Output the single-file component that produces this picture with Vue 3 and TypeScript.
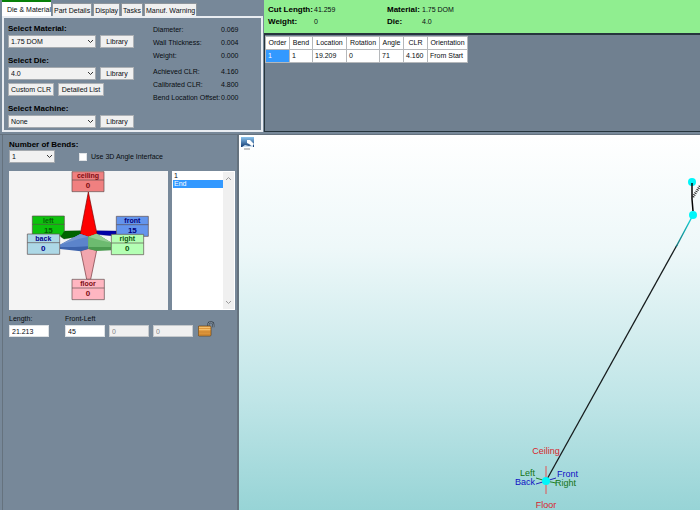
<script setup lang="ts">
import { ref } from 'vue'

interface Field { label: string; value: string }
interface Picker { id: string; label: string; options: string[]; value: string; extra: string[] }
interface Face { name: string; value: number; x: number; y: number; fill: string; ink: string }

const tabs = ['Die & Material', 'Part Details', 'Display', 'Tasks', 'Manuf. Warning']
const activeTab = ref(0)

const pickers = ref<Picker[]>([
  { id: 'material', label: 'Select Material:', options: ['1.75 DOM'], value: '1.75 DOM', extra: [] },
  { id: 'die', label: 'Select Die:', options: ['4.0'], value: '4.0', extra: ['Custom CLR', 'Detailed List'] },
  { id: 'machine', label: 'Select Machine:', options: ['None'], value: 'None', extra: [] },
])

const factGroups: Field[][] = [
  [
    { label: 'Diameter:', value: '0.069' },
    { label: 'Wall Thickness:', value: '0.004' },
    { label: 'Weight:', value: '0.000' },
  ],
  [
    { label: 'Achieved CLR:', value: '4.160' },
    { label: 'Calibrated CLR:', value: '4.800' },
    { label: 'Bend Location Offset:', value: '0.000' },
  ],
]

const summary: Field[] = [
  { label: 'Cut Length:', value: '41.259' },
  { label: 'Material:', value: '1.75 DOM' },
  { label: 'Weight:', value: '0' },
  { label: 'Die:', value: '4.0' },
]

const columns = ['Order', 'Bend', 'Location', 'Rotation', 'Angle', 'CLR', 'Orientation']
const rows = [['1', '1', '19.209', '0', '71', '4.160', 'From Start']]

const bendCount = ref('1')
const use3d = ref(false)
const segment = ref('End')
const length = ref('21.213')
const frontLeft = ref('45')
const angleB = ref('0')
const angleC = ref('0')

const backFaces: Face[] = [
  { name: 'ceiling', value: 0, x: 216, y: 20, fill: '#f08080', ink: '#7d0c12' },
  { name: 'left', value: 15, x: 97, y: 153, fill: '#0cc20c', ink: '#066006' },
  { name: 'front', value: 15, x: 349, y: 154, fill: '#6495ed', ink: '#00007c' },
]
const frontFaces: Face[] = [
  { name: 'back', value: 0, x: 82, y: 207, fill: '#add8e6', ink: '#00008b' },
  { name: 'right', value: 0, x: 334, y: 208, fill: '#b4ffb4', ink: '#0b550b' },
  { name: 'floor', value: 0, x: 216, y: 343, fill: '#ffb6c1', ink: '#7d0c12' },
]
</script>

<template>
  <main class="app">
    <div class="top">
      <section class="setup">
        <div class="tabs" role="tablist">
          <button v-for="(t, i) in tabs" :key="t" type="button" role="tab" class="tab"
            :class="{ active: i === activeTab }" :aria-selected="i === activeTab" @click="activeTab = i">{{ t }}</button>
        </div>
        <div class="sheet">
          <div class="pickers">
            <div v-for="p in pickers" :key="p.id" class="picker">
              <label class="strong" :for="p.id">{{ p.label }}</label>
              <div class="line">
                <span class="combo">
                  <select :id="p.id" v-model="p.value"><option v-for="o in p.options" :key="o">{{ o }}</option></select>
                  <svg viewBox="0 0 7 5" aria-hidden="true"><path d="M1 1l2.5 2.5L6 1" /></svg>
                </span>
                <button type="button" class="btn library">Library</button>
              </div>
              <div v-if="p.extra.length" class="extras">
                <button v-for="e in p.extra" :key="e" type="button" class="btn">{{ e }}</button>
              </div>
            </div>
          </div>
          <div class="facts">
            <dl v-for="(g, i) in factGroups" :key="i">
              <template v-for="f in g" :key="f.label"><dt>{{ f.label }}</dt><dd>{{ f.value }}</dd></template>
            </dl>
          </div>
        </div>
      </section>

      <section class="results">
        <dl class="summary">
          <template v-for="s in summary" :key="s.label"><dt>{{ s.label }}</dt><dd>{{ s.value }}</dd></template>
        </dl>
        <div class="grid">
          <table>
            <colgroup><col class="w24"><col class="w23"><col class="w34"><col class="w33"><col class="w24"><col class="w24"><col class="w40"></colgroup>
            <thead><tr><th v-for="c in columns" :key="c" scope="col">{{ c }}</th></tr></thead>
            <tbody>
              <tr v-for="r in rows" :key="r[0]"><td v-for="(c, i) in r" :key="i" :class="{ picked: i === 0 }">{{ c }}</td></tr>
            </tbody>
          </table>
        </div>
      </section>
    </div>

    <div class="bottom">
      <section class="bends">
        <label class="strong" for="bend-count">Number of Bends:</label>
        <div class="count">
          <span class="combo small">
            <select id="bend-count" v-model="bendCount"><option>1</option><option>2</option></select>
            <svg viewBox="0 0 7 5" aria-hidden="true"><path d="M1 1l2.5 2.5L6 1" /></svg>
          </span>
          <label class="check"><input v-model="use3d" type="checkbox">Use 3D Angle Interface</label>
        </div>

        <div class="orient">
          <svg class="compass" viewBox="27 18 477 417" role="img" aria-label="Direction angles">
            <g stroke-linejoin="round">
              <g v-for="f in backFaces" :key="f.name">
                <rect :x="f.x" :y="f.y" width="96" height="60" :fill="f.fill" stroke="#5c4b4b" stroke-width="2" />
                <path :d="`M${f.x} ${f.y + 25}h96`" stroke="#5c4b4b" stroke-width="2" />
                <text class="face" :x="f.x + 48" :y="f.y + 20" :fill="f.ink">{{ f.name }}</text>
                <text class="num" :x="f.x + 48" :y="f.y + 50" :fill="f.ink">{{ f.value }}</text>
              </g>
              <path d="M194 198L241 197L250 212L192 222L182 215Z" fill="#006400" stroke="#033c03" />
              <path d="M290 197L348 198V208L334 212L285 208Z" fill="#0000a8" stroke="#000060" />
              <path d="M265 81L291 207L265 216L241 207Z" fill="#fe0000" stroke="#780000" stroke-width="2" />
              <path d="M242 256L265 250L290 256L272 343H260Z" fill="#f2a6ae" stroke="#6f3038" stroke-width="2" />
              <path d="M180 239L241 207L265 215V252L242 259L180 252Z" fill="#3d63ac" />
              <path d="M180 239L241 207L265 215V244L225 246L180 246Z" fill="#5c84cb" />
              <path d="M180 239L241 207L265 215L235 222Z" fill="#7697cf" />
              <path d="M265 215L290 206L334 233V256L290 258L265 252Z" fill="#4b9b50" />
              <path d="M265 215L290 206L334 233V246L265 246Z" fill="#6dbb70" />
              <path d="M265 215L290 206L334 233L298 225Z" fill="#93ce93" />
              <g v-for="f in frontFaces" :key="f.name">
                <rect :x="f.x" :y="f.y" width="97" height="61" :fill="f.fill" stroke="#5c4b4b" stroke-width="2" />
                <path :d="`M${f.x} ${f.y + 26}h97`" stroke="#5c4b4b" stroke-width="2" />
                <text class="face" :x="f.x + 48" :y="f.y + 20" :fill="f.ink">{{ f.name }}</text>
                <text class="num" :x="f.x + 48" :y="f.y + 50" :fill="f.ink">{{ f.value }}</text>
              </g>
            </g>
          </svg>
          <div class="segments">
            <ul role="listbox" aria-label="Segments">
              <li v-for="s in ['1', 'End']" :key="s" role="option" tabindex="0" :aria-selected="s === segment"
                :class="{ chosen: s === segment }" @click="segment = s" @keydown.enter="segment = s">{{ s }}</li>
            </ul>
            <span class="rail" aria-hidden="true">
              <svg viewBox="0 0 7 5"><path d="M1 4l2.5-2.5L6 4" /></svg>
              <svg viewBox="0 0 7 5"><path d="M1 1l2.5 2.5L6 1" /></svg>
            </span>
          </div>
        </div>

        <div class="measures">
          <div class="measure first">
            <label for="length">Length:</label>
            <input id="length" v-model="length" type="text">
          </div>
          <div class="measure">
            <label for="front-left">Front-Left</label>
            <input id="front-left" v-model="frontLeft" type="text">
          </div>
          <input v-model="angleB" type="text" aria-label="Second angle" disabled>
          <input v-model="angleC" type="text" aria-label="Third angle" disabled>
          <button type="button" class="lock" aria-label="Unlock">
            <svg viewBox="0 0 51 48">
              <path d="M31 16V9Q32 4 38 4Q46 4 46 11V19" fill="none" stroke="#303b45" stroke-width="6" />
              <path d="M31 16V9Q32 4 38 4Q46 4 46 11V19" fill="none" stroke="#a8b4bf" stroke-width="2" />
              <rect x="1" y="15" width="38" height="30" rx="3" fill="#e0983c" stroke="#5f3c14" stroke-width="2" />
              <path d="M3 19H37M3 26H37" stroke="#f7c777" stroke-width="3" />
              <path d="M3 33H37M3 40H37" stroke="#c27c2b" stroke-width="2" />
            </svg>
          </button>
        </div>
      </section>

      <section class="view">
        <svg class="scene" viewBox="0 0 461 375" preserveAspectRatio="xMinYMin slice" role="img" aria-label="Bent tube preview">
          <defs>
            <linearGradient id="pic" x2="0" y2="1"><stop stop-color="#8bc4ee" /><stop offset="1" stop-color="#153d73" /></linearGradient>
            <linearGradient id="bend" gradientUnits="userSpaceOnUse" x1="454" y1="80" x2="437" y2="112"><stop stop-color="#16dfe3" /><stop offset="1" stop-color="#126f75" /></linearGradient>
          </defs>
          <rect x="2" y="2" width="13" height="10" fill="url(#pic)" />
          <path d="M3 12L6 10L10 11L14 10V12Z" fill="#cfe2f1" />
          <path d="M8 5L11 5L15 9L13 11L10 9L8 8Z" fill="#fff" />
          <path d="M5 14H11" stroke="#8f8f8f" />

          <path d="M307 346L438 110" stroke="#161c1d" stroke-width="1.3" />
          <path d="M437 112L454 80" stroke="url(#bend)" stroke-width="1.4" />
          <circle cx="453" cy="47" r="4" fill="#00f6fa" />
          <circle cx="454" cy="80" r="4" fill="#00f6fa" />
          <path d="M453 48V64L454 76" stroke="#050505" stroke-width="1.5" fill="none" />
          <path d="M454 62L461 51" stroke="#252525" stroke-width="2.5" stroke-dasharray="1 1" />

          <path d="M307 331V359" stroke="#e25353" />
          <path d="M297 343L307 346L317 348" stroke="#258225" fill="none" />
          <path d="M297 349L307 346L317 343" stroke="#2525b8" fill="none" />
          <circle cx="307" cy="346" r="4" fill="#00f6fa" />
          <g class="axis">
            <text x="307" y="319" text-anchor="middle" fill="#d8262c">Ceiling</text>
            <text x="307" y="373" text-anchor="middle" fill="#d8262c">Floor</text>
            <text x="296" y="341" text-anchor="end" fill="#137413">Left</text>
            <text x="296" y="350" text-anchor="end" fill="#1010c4">Back</text>
            <text x="318" y="342" fill="#1010c4">Front</text>
            <text x="316" y="351" fill="#137413">Right</text>
          </g>
        </svg>
      </section>
    </div>
  </main>
</template>

<style>
body { margin: 0; background: #778899; }
</style>

<style scoped>
* { box-sizing: border-box; }
.app {
  min-height: 100vh;
  display: flex;
  flex-direction: column;
  background: #778899;
  color: #080c10;
  font: 7px/10px "Liberation Sans", Arial, sans-serif;
  white-space: nowrap;
}
button, input, select { font: inherit; color: inherit; margin: 0; }
dl, dd, ul { margin: 0; padding: 0; }
.strong { font-size: 8px; font-weight: bold; line-height: 10px; color: #000; }

.top { display: flex; }
.setup { width: 264px; flex: none; padding: 0 1px 2px 2px; display: flex; flex-direction: column; }
.tabs { display: flex; align-items: flex-end; gap: 1px; height: 16px; }
.tab {
  height: 13px; padding: 0 1px; border: 1px solid #8e959c; border-bottom: 0;
  background: #f0f0f0; line-height: 11px;
}
.tab.active { height: 16px; padding: 0 0 0 5px; border: 0; border-top: 2px solid #088008; background: #fff; }
.sheet { flex: 1; display: flex; border: 2px solid #e9edf2; padding: 6px 0 2px 4px; }
.pickers { width: 145px; display: flex; flex-direction: column; gap: 8px; }
.picker { display: flex; flex-direction: column; gap: 1px; }
.line { display: flex; align-items: center; gap: 4px; }
.combo { display: grid; width: 88px; height: 13px; align-items: center; }
.combo.small { width: 46px; }
.combo select, .combo svg { grid-area: 1 / 1; }
.combo select {
  appearance: none; width: 100%; height: 13px; padding: 0 10px 0 2px;
  border: 1px solid #a4a9ae; border-radius: 0; background: #f1f1f1; line-height: 11px;
}
.combo svg { width: 7px; height: 5px; justify-self: end; margin-right: 2px; pointer-events: none; }
.combo path, .rail path { fill: none; stroke: #353535; stroke-width: 1; }
.btn { height: 13px; padding: 0; border: 1px solid #adb1b5; background: #f0f0f0; line-height: 11px; }
.library { width: 34px; }
.extras { display: flex; gap: 4px; margin-top: 2px; }
.extras .btn { width: 46px; }
.facts { display: flex; flex-direction: column; gap: 4px; }
.facts dl { display: grid; grid-template-columns: 68px auto; row-gap: 1px; line-height: 12px; }

.results { flex: 1; min-width: 0; display: flex; flex-direction: column; padding-bottom: 2px; }
.summary {
  display: grid; grid-template-columns: 46px 73px 35px auto; justify-content: start;
  padding: 4px 0 5px 4px; line-height: 12px; background: #90ee90;
}
.summary dt { font-weight: bold; color: #000; font-size: 8px; }
.grid { flex: 1; background: #708090; border: solid #26353d; border-width: 2px 0 1px 1px; padding-top: 1px; }
table { border-collapse: collapse; table-layout: fixed; width: 202px; background: #fff; }
th, td { padding: 0 2px; height: 12px; border: 1px solid #b5b8bb; font-weight: normal; line-height: 12px; text-align: left; overflow: hidden; }
th { text-align: center; padding: 0; }
td.picked { background: #3399ff; color: #fff; }
.w24 { width: 24px; } .w23 { width: 23px; } .w34 { width: 34px; } .w33 { width: 33px; } .w40 { width: 40px; }

.bottom { flex: 1; display: flex; border-top: 1px solid #65727e; }
.bends { flex: none; width: 237px; margin-left: 2px; padding: 5px 0 0 6px; border-left: 1px solid #65727e; border-right: 2px solid #65727e; display: flex; flex-direction: column; }
.count { display: flex; align-items: center; gap: 24px; }
.check { display: flex; align-items: center; gap: 4px; }
.check input { appearance: none; width: 8px; height: 8px; background: #fff; border: 1px solid #e0e3e6; }
.check input:checked { background: #1f66b0; }
.orient { display: flex; gap: 4px; margin-top: 8px; }
.compass { width: 159px; height: 139px; background: #f4f4f4; }
.compass text { text-anchor: middle; font-weight: bold; }
.face { font-size: 21px; }
.num { font-size: 24px; }
.segments { width: 63px; display: flex; background: #fff; padding: 1px; }
.segments ul { flex: 1; list-style: none; }
.segments li { height: 8px; line-height: 8px; padding-left: 1px; }
.segments .chosen { background: #3399ff; color: #fff; }
.rail { width: 11px; background: #f0f0f0; display: flex; flex-direction: column; justify-content: space-between; align-items: center; padding: 4px 0; }
.rail svg { width: 7px; height: 5px; }
.rail path { stroke: #9a9a9a; }

.measures { display: flex; align-items: flex-end; gap: 4px; margin-top: 4px; }
.measure { display: flex; flex-direction: column; gap: 1px; }
.measure.first { margin-right: 12px; }
.measures input { width: 40px; height: 12px; padding: 0 2px; border: 1px solid #dde1e4; border-radius: 0; background: #fff; line-height: 10px; }
.measures input:disabled { background: #f0f0f0; color: #848484; border-color: #c5c9cc; }
.lock { padding: 0; margin-left: 1px; border: 0; background: none; height: 17px; }
.lock svg { display: block; width: 17px; height: 16px; }

.view { flex: 1; min-width: 0; display: flex; background: linear-gradient(#ffffff, #eef8f9 30%, #bfe5e7 71%, #97d4d6); }
.scene { width: 100%; display: block; }
.axis { font: 9px "Liberation Sans", sans-serif; }
</style>
